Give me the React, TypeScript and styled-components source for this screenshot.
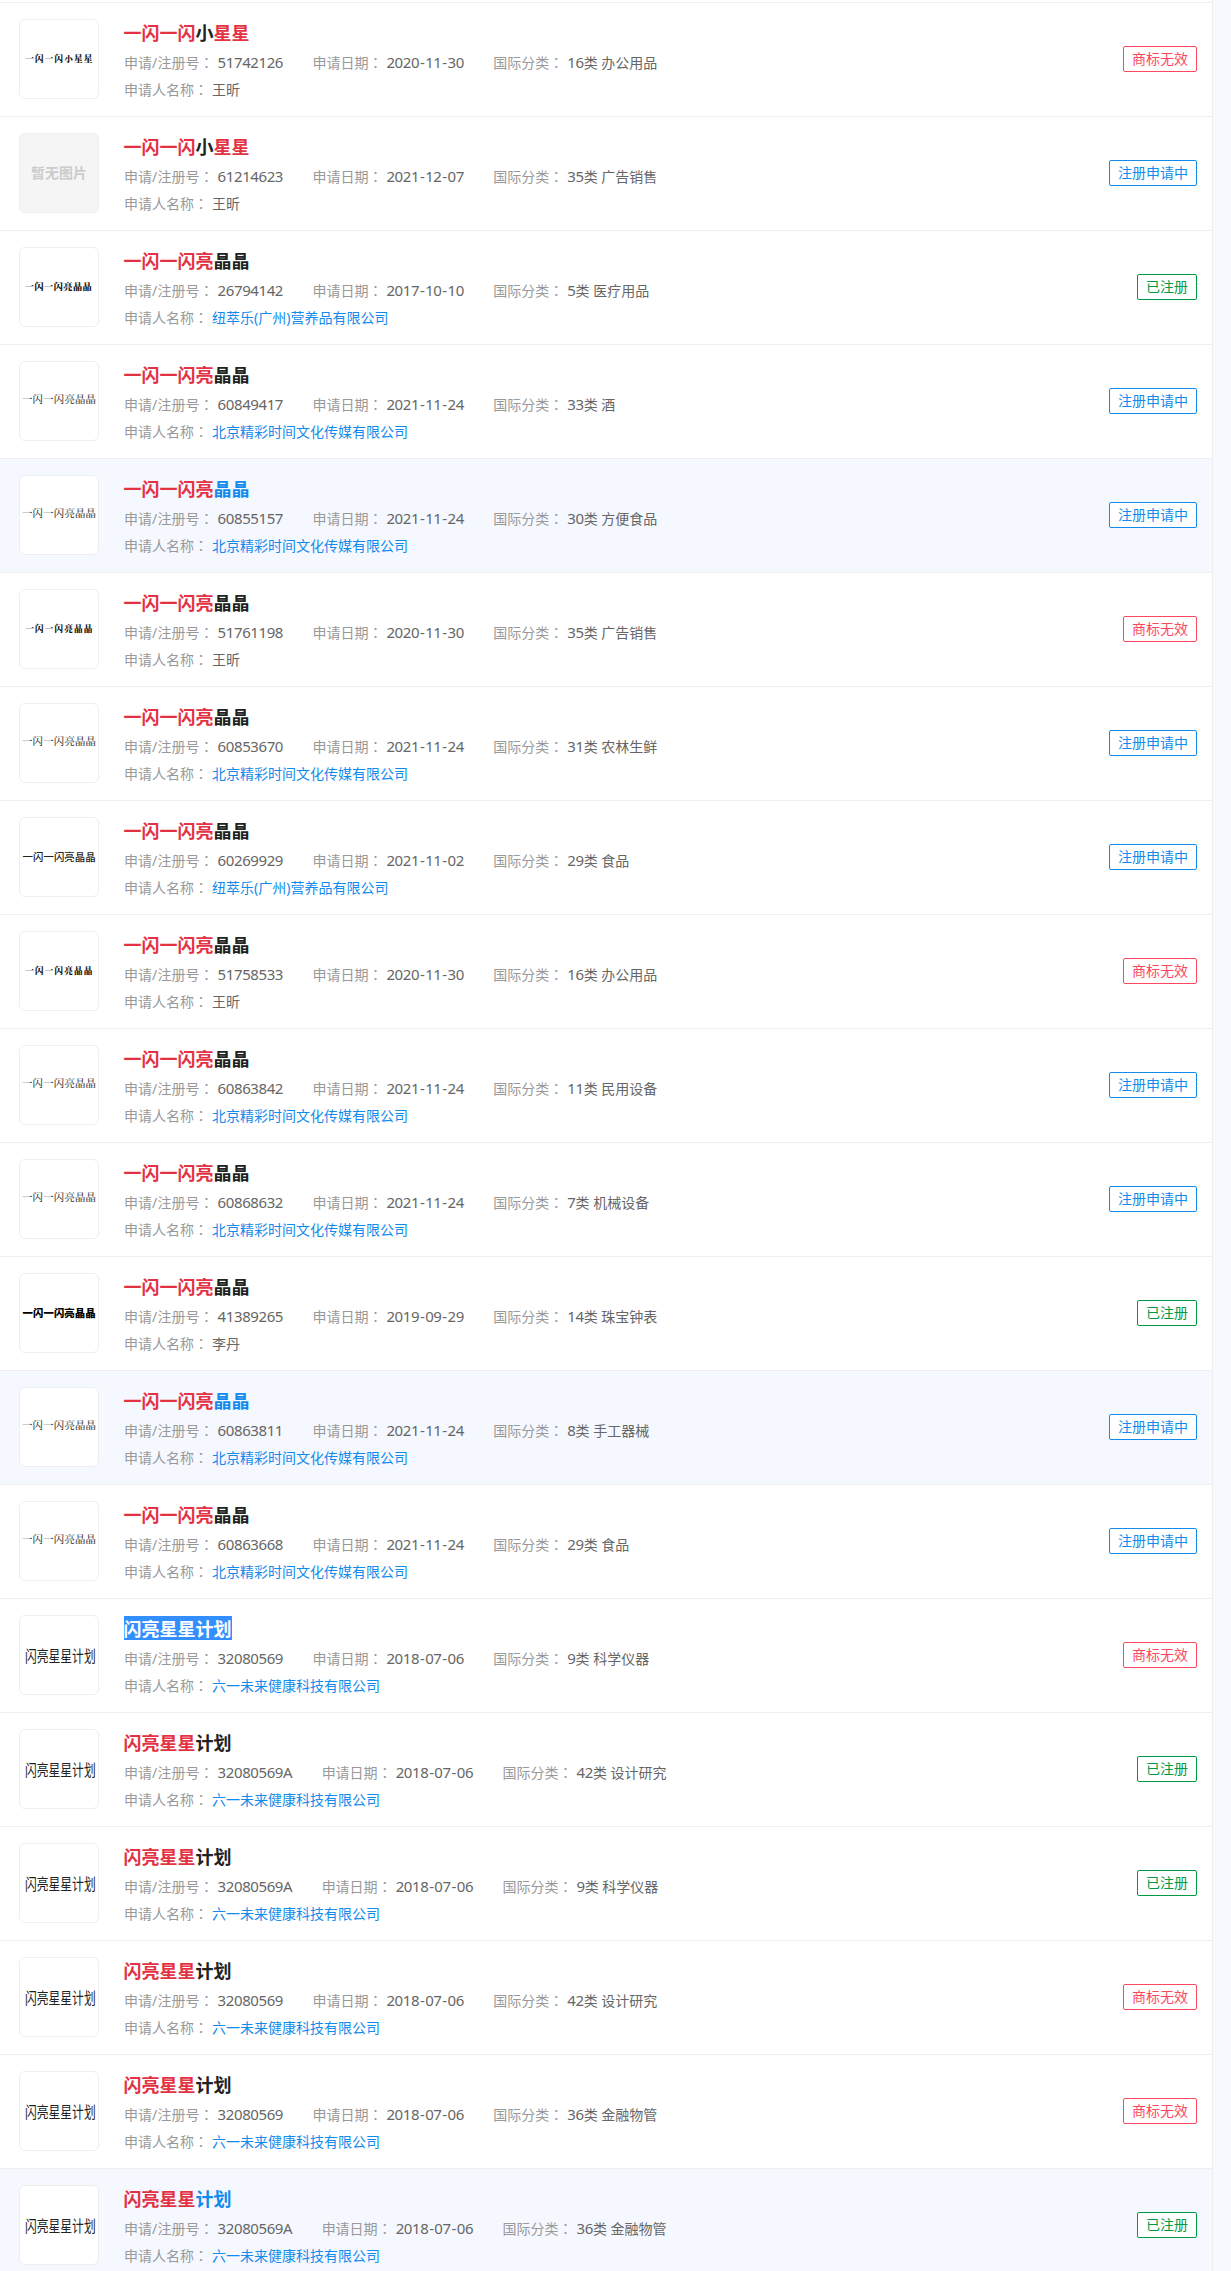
import React from 'react';
import styled, { createGlobalStyle } from 'styled-components';

const Global = createGlobalStyle`
  * { box-sizing: border-box; }
  html, body { margin: 0; background: #f7f9ff; }
  body { height: 2271px; overflow: hidden; font-family: 'Noto Sans', 'Noto Sans CJK SC', sans-serif; font-size: 14px; color: #666; }
`;

const Page = styled.main`
  width: 1213px;
  height: 2271px;
  overflow: hidden;
  padding-top: 2px;
  background: #fff;
  border-right: 1px solid #eee;
`;

const List = styled.ul`
  list-style: none;
  margin: 0;
  padding: 0;
  border-top: 1px solid #eee;
`;

const Row = styled.li<{ $active?: boolean }>`
  display: flex;
  height: 114px;
  padding: 16px 15px 0 19px;
  border-bottom: 1px solid #eee;
  background: ${p => (p.$active ? '#f5f8ff' : '#fff')};
`;

const Thumb = styled.div<{ $empty?: boolean }>`
  width: 80px;
  height: 80px;
  flex: none;
  border: 1px solid #eee;
  border-radius: 6px;
  background: ${p => (p.$empty ? '#f5f5f5' : '#fff')};
  svg { display: block; }
`;

const Info = styled.div`
  flex: 1;
  margin-left: 25px;
`;

const Title = styled.h3<{ $active?: boolean; $selected?: boolean }>`
  display: table;
  margin: 1px 0 0 -0.4px;
  height: 24px;
  font-size: 18px;
  line-height: 24px;
  font-weight: 700;
  font-family: 'Noto Sans CJK SC', sans-serif;
  color: ${p => (p.$selected ? '#fff' : p.$active ? '#128bed' : '#222')};
  background: ${p => (p.$selected ? '#338fff' : 'transparent')};
  em { font-style: normal; color: ${p => (p.$selected ? '#fff' : '#e33244')}; }
`;

const Line = styled.div`
  display: flex;
  gap: 29.4px;
  height: 27px;
  line-height: 27px;
  white-space: pre;
  &:first-of-type { margin-top: 5px; }
`;

const Field = styled.div`
  display: flex;
`;

const Label = styled.span`
  color: #999;
  margin-right: 4px;
`;

const Slash = styled.span`
  display: inline-block;
  width: 5.6px;
`;

const Colon = styled.span`
  font-family: 'Noto Sans CJK JP', sans-serif;
`;

const Digits = styled.span`
  font-size: 15px;
  letter-spacing: -0.4px;
`;

const Dash = styled.span`
  display: inline-block;
  width: 6px;
  text-align: center;
`;

const Link = styled.a`
  color: #128bed;
`;

const tones = { 商标无效: '#ff485f', 注册申请中: '#128bed', 已注册: '#009944' };
type Status = keyof typeof tones;

const Badge = styled.span<{ $tone: string }>`
  flex: none;
  height: 26px;
  margin-top: 27px;
  padding: 0 8px;
  border: 1px solid ${p => p.$tone};
  border-radius: 2px;
  line-height: 23px;
  color: ${p => p.$tone};
  background: #fff;
`;

type Mark = 'brush' | 'kai' | 'song' | 'hei' | 'bold' | 'plan' | 'none';

const serif = "'Noto Serif CJK SC', 'Noto Sans CJK SC', serif";
const sans = "'Noto Sans CJK SC', sans-serif";

const marks: Record<Mark, { font: string; x: number; y: number; size: number; len: number; weight: number; fill: string; sx?: number }> = {
  brush: { font: serif, x: 5.4, y: 41.8, size: 8.6, len: 67, weight: 900, fill: '#111' },
  kai: { font: serif, x: 4.8, y: 41.8, size: 9.2, len: 67, weight: 900, fill: '#111' },
  song: { font: serif, x: 2, y: 40.8, size: 10.4, len: 74, weight: 500, fill: '#333' },
  hei: { font: sans, x: 2.6, y: 42.8, size: 10.4, len: 73, weight: 500, fill: '#222' },
  bold: { font: sans, x: 2.6, y: 42.8, size: 10.4, len: 73, weight: 900, fill: '#000' },
  plan: { font: sans, x: 5, y: 45.8, size: 15.5, len: 93, weight: 400, fill: '#222', sx: 0.76 },
  none: { font: sans, x: 11, y: 44.2, size: 14, len: 56, weight: 700, fill: '#ccc' },
};

function MarkImage({ kind, text }: { kind: Mark; text: string }) {
  const m = marks[kind];
  return (
    <svg width="78" height="78" viewBox="0 0 78 78">
      <text
        transform={`translate(${m.x} ${m.y}) scale(${m.sx ?? 1} 1)`}
        fontFamily={m.font}
        fontSize={m.size}
        fontWeight={m.weight}
        fill={m.fill}
        textLength={m.len}
      >
        {text}
      </text>
    </svg>
  );
}

type Item = {
  hit: string; rest: string; tail?: string; no: string; date: string; cls: string; kind: string;
  owner: string; status: Status; mark: Mark; active?: boolean; selected?: boolean;
};

const BJ = '北京精彩时间文化传媒有限公司';
const GZ = '纽萃乐(广州)营养品有限公司';
const LY = '六一未来健康科技有限公司';
const star = { hit: '一闪一闪', rest: '小', tail: '星星' };
const shine = { hit: '一闪一闪亮', rest: '晶晶' };
const plan = { hit: '闪亮星星', rest: '计划', date: '2018-07-06', owner: LY, mark: 'plan' as Mark };

const items: Item[] = [
  { ...star, no: '51742126', date: '2020-11-30', cls: '16', kind: '办公用品', owner: '王昕', status: '商标无效', mark: 'brush' },
  { ...star, no: '61214623', date: '2021-12-07', cls: '35', kind: '广告销售', owner: '王昕', status: '注册申请中', mark: 'none' },
  { ...shine, no: '26794142', date: '2017-10-10', cls: '5', kind: '医疗用品', owner: GZ, status: '已注册', mark: 'kai' },
  { ...shine, no: '60849417', date: '2021-11-24', cls: '33', kind: '酒', owner: BJ, status: '注册申请中', mark: 'song' },
  { ...shine, no: '60855157', date: '2021-11-24', cls: '30', kind: '方便食品', owner: BJ, status: '注册申请中', mark: 'song', active: true },
  { ...shine, no: '51761198', date: '2020-11-30', cls: '35', kind: '广告销售', owner: '王昕', status: '商标无效', mark: 'brush' },
  { ...shine, no: '60853670', date: '2021-11-24', cls: '31', kind: '农林生鲜', owner: BJ, status: '注册申请中', mark: 'song' },
  { ...shine, no: '60269929', date: '2021-11-02', cls: '29', kind: '食品', owner: GZ, status: '注册申请中', mark: 'hei' },
  { ...shine, no: '51758533', date: '2020-11-30', cls: '16', kind: '办公用品', owner: '王昕', status: '商标无效', mark: 'brush' },
  { ...shine, no: '60863842', date: '2021-11-24', cls: '11', kind: '民用设备', owner: BJ, status: '注册申请中', mark: 'song' },
  { ...shine, no: '60868632', date: '2021-11-24', cls: '7', kind: '机械设备', owner: BJ, status: '注册申请中', mark: 'song' },
  { ...shine, no: '41389265', date: '2019-09-29', cls: '14', kind: '珠宝钟表', owner: '李丹', status: '已注册', mark: 'bold' },
  { ...shine, no: '60863811', date: '2021-11-24', cls: '8', kind: '手工器械', owner: BJ, status: '注册申请中', mark: 'song', active: true },
  { ...shine, no: '60863668', date: '2021-11-24', cls: '29', kind: '食品', owner: BJ, status: '注册申请中', mark: 'song' },
  { ...plan, no: '32080569', cls: '9', kind: '科学仪器', status: '商标无效', selected: true },
  { ...plan, no: '32080569A', cls: '42', kind: '设计研究', status: '已注册' },
  { ...plan, no: '32080569A', cls: '9', kind: '科学仪器', status: '已注册' },
  { ...plan, no: '32080569', cls: '42', kind: '设计研究', status: '商标无效' },
  { ...plan, no: '32080569', cls: '36', kind: '金融物管', status: '商标无效' },
  { ...plan, no: '32080569A', cls: '36', kind: '金融物管', status: '已注册', active: true },
];

function TrademarkRow({ item }: { item: Item }) {
  const name = item.hit + item.rest + (item.tail ?? '');
  return (
    <Row $active={item.active}>
      <Thumb $empty={item.mark === 'none'}>
        <MarkImage kind={item.mark} text={item.mark === 'none' ? '暂无图片' : name} />
      </Thumb>
      <Info>
        <Title $active={item.active} $selected={item.selected}>
          <em>{item.hit}</em>{item.rest}{item.tail && <em>{item.tail}</em>}
        </Title>
        <Line>
          <Field>
            <Label>申请<Slash>/</Slash>注册号<Colon>：</Colon></Label>
            <Digits>{item.no}</Digits>
          </Field>
          <Field>
            <Label>申请日期<Colon>：</Colon></Label>
            <Digits>
              {item.date.split('-').map((part, i) => (
                <React.Fragment key={i}>{i > 0 && <Dash>-</Dash>}{part}</React.Fragment>
              ))}
            </Digits>
          </Field>
          <Field>
            <Label>国际分类<Colon>：</Colon></Label>
            <span><Digits>{item.cls}</Digits>类 {item.kind}</span>
          </Field>
        </Line>
        <Line>
          <Field>
            <Label>申请人名称<Colon>：</Colon></Label>
            {item.owner.length > 2 ? <Link>{item.owner}</Link> : <span>{item.owner}</span>}
          </Field>
        </Line>
      </Info>
      <Badge $tone={tones[item.status]}>{item.status}</Badge>
    </Row>
  );
}

export default function App() {
  return (
    <>
      <Global />
      <Page>
        <List>
          {items.map((item, i) => <TrademarkRow key={i} item={item} />)}
        </List>
      </Page>
    </>
  );
}
